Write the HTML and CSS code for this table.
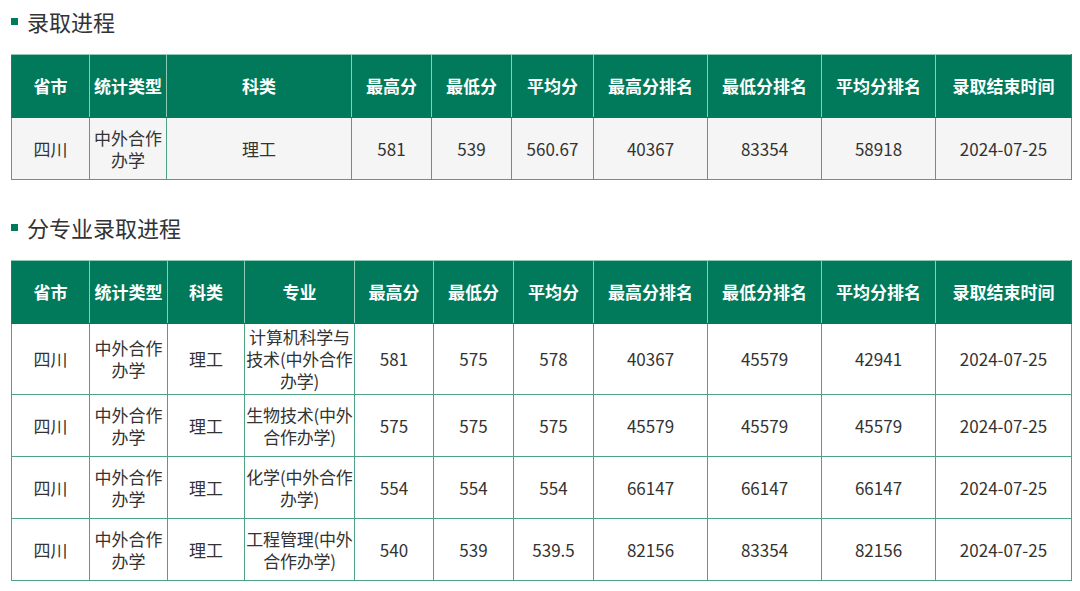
FILE: index.html
```html
<!DOCTYPE html>
<html lang="zh">
<head>
<meta charset="utf-8">
<link rel="stylesheet" href="styles.css">
</head>
<body>
<h2 class="sec-title">录取进程</h2>
<table class="data t1">
  <colgroup>
    <col style="width:78px"><col style="width:77px"><col style="width:185px"><col style="width:80px"><col style="width:80px"><col style="width:82px"><col style="width:114px"><col style="width:114px"><col style="width:114px"><col style="width:136px">
  </colgroup>
  <thead>
    <tr><th>省市</th><th>统计类型</th><th>科类</th><th>最高分</th><th>最低分</th><th>平均分</th><th>最高分排名</th><th>最低分排名</th><th>平均分排名</th><th>录取结束时间</th></tr>
  </thead>
  <tbody>
    <tr><td>四川</td><td>中外合作办学</td><td>理工</td><td>581</td><td>539</td><td>560.67</td><td>40367</td><td>83354</td><td>58918</td><td>2024-07-25</td></tr>
  </tbody>
</table>

<h2 class="sec-title second">分专业录取进程</h2>
<table class="data t2">
  <colgroup>
    <col style="width:78px"><col style="width:78px"><col style="width:77px"><col style="width:110px"><col style="width:79px"><col style="width:80px"><col style="width:80px"><col style="width:114px"><col style="width:114px"><col style="width:114px"><col style="width:136px">
  </colgroup>
  <thead>
    <tr><th>省市</th><th>统计类型</th><th>科类</th><th>专业</th><th>最高分</th><th>最低分</th><th>平均分</th><th>最高分排名</th><th>最低分排名</th><th>平均分排名</th><th>录取结束时间</th></tr>
  </thead>
  <tbody>
    <tr><td>四川</td><td>中外合作办学</td><td>理工</td><td class="major">计算机科学与技术(中外合作办学)</td><td>581</td><td>575</td><td>578</td><td>40367</td><td>45579</td><td>42941</td><td>2024-07-25</td></tr>
    <tr><td>四川</td><td>中外合作办学</td><td>理工</td><td class="major">生物技术(中外合作办学)</td><td>575</td><td>575</td><td>575</td><td>45579</td><td>45579</td><td>45579</td><td>2024-07-25</td></tr>
    <tr><td>四川</td><td>中外合作办学</td><td>理工</td><td class="major">化学(中外合作办学)</td><td>554</td><td>554</td><td>554</td><td>66147</td><td>66147</td><td>66147</td><td>2024-07-25</td></tr>
    <tr><td>四川</td><td>中外合作办学</td><td>理工</td><td class="major">工程管理(中外合作办学)</td><td>540</td><td>539</td><td>539.5</td><td>82156</td><td>83354</td><td>82156</td><td>2024-07-25</td></tr>
  </tbody>
</table>
</body>
</html>
```

FILE: styles.css
```css
html, body {
  margin: 0;
  padding: 0;
  background: #ffffff;
}
body {
  padding: 0 9px 0 11px;
  font-family: "Noto Sans CJK SC", "Noto Sans", sans-serif;
  color: #333333;
}
.sec-title {
  margin: 0 0 12px 0;
  height: 42px;
  line-height: 42px;
  font-size: 22px;
  font-weight: normal;
  color: #333333;
  display: flex;
  align-items: center;
  gap: 9px;
}
.sec-title::before {
  content: "";
  width: 7px;
  height: 7px;
  background: #007a5a;
  flex: none;
}
.sec-title.second {
  margin-top: 26px;
}
.data {
  width: 1060px;
  border-collapse: collapse;
  table-layout: fixed;
  border: 1px solid #1b8463;
}
.data th {
  background: #007a5a;
  color: #ffffff;
  font-weight: bold;
  font-size: 17px;
  line-height: 22px;
  height: 62px;
  padding: 0 1px;
  text-align: center;
  border: 1px solid #8fcab4;
  border-bottom-color: #007a5a;
}
.data th:first-child { border-left-color: #1b8463; }
.data th:last-child { border-right-color: #1b8463; }
.data td {
  font-size: 17px;
  line-height: 22px;
  height: 57px;
  padding: 2px 1px 2px 1px;
  text-align: center;
  border: 1px solid #4ea283;
  color: #333333;
  word-break: break-all;
}
.data td.major {
  padding: 2px 0;
  letter-spacing: -0.2px;
}
.t1 td {
  background: #f5f5f5;
}
.t2 td {
  background: #ffffff;
}
```
